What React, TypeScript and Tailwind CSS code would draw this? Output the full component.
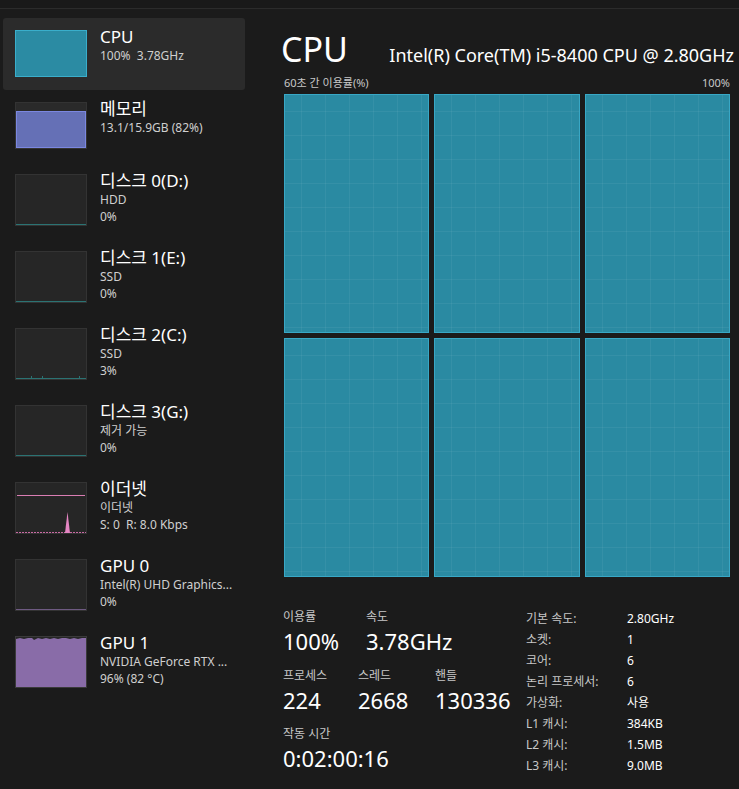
type Item = {
  title: string;
  lines: string[];
  thumb: "cpu" | "mem" | "disk" | "disk2" | "eth" | "gpu0" | "gpu1";
  selected?: boolean;
};

const items: Item[] = [
  { title: "CPU", lines: ["100%  3.78GHz"], thumb: "cpu", selected: true },
  { title: "메모리", lines: ["13.1/15.9GB (82%)"], thumb: "mem" },
  { title: "디스크 0(D:)", lines: ["HDD", "0%"], thumb: "disk" },
  { title: "디스크 1(E:)", lines: ["SSD", "0%"], thumb: "disk" },
  { title: "디스크 2(C:)", lines: ["SSD", "3%"], thumb: "disk2" },
  { title: "디스크 3(G:)", lines: ["제거 가능", "0%"], thumb: "disk" },
  { title: "이더넷", lines: ["이더넷", "S: 0  R: 8.0 Kbps"], thumb: "eth" },
  { title: "GPU 0", lines: ["Intel(R) UHD Graphics...", "0%"], thumb: "gpu0" },
  { title: "GPU 1", lines: ["NVIDIA GeForce RTX ...", "96% (82 °C)"], thumb: "gpu1" },
];

function Thumb({ kind }: { kind: Item["thumb"] }) {
  if (kind === "cpu") {
    return <div className="w-[72px] h-full border border-[#3aaecb] bg-[#2b8ba3]" />;
  }
  if (kind === "mem") {
    return (
      <div className="w-[72px] h-full flex flex-col border border-[#333] bg-[#2a2a2a]">
        <div className="h-[8px]" />
        <div className="flex-1 border border-[#7b87e0] bg-[#6570b6]" />
      </div>
    );
  }
  if (kind === "gpu1") {
    return (
      <div className="w-[72px] h-full border border-[#3a3a3a] bg-[#262626]">
        <svg viewBox="0 0 70 50" preserveAspectRatio="none" className="w-full h-full">
          <polygon
            points="0,2 4,1 8,2 12,1 16,1 18,3 22,1 26,2 30,1 34,2 38,1 42,2 46,1 50,1 54,2 58,1 62,2 66,1 70,1 70,50 0,50"
            fill="#896ca8"
          />
        </svg>
      </div>
    );
  }
  if (kind === "eth") {
    return (
      <div className="w-[72px] h-full border border-[#333] bg-[#262626]">
        <svg viewBox="0 0 70 50" preserveAspectRatio="none" className="w-full h-full">
          <line x1="1" y1="12.5" x2="69" y2="12.5" stroke="#d97db3" strokeWidth="1" />
          <line x1="0" y1="49.5" x2="70" y2="49.5" stroke="#c86aa3" strokeWidth="1" strokeDasharray="2 1" />
          <polygon points="49,50 51.5,29 54,50" fill="#e586c3" />
        </svg>
      </div>
    );
  }
  const line = kind === "gpu0" ? "bg-[#6e5a82]" : "bg-[#2b7373]";
  return (
    <div className="w-[72px] h-full flex flex-col border border-[#333] bg-[#262626]">
      <div className="flex-1 relative">
        {kind === "disk2" && (
          <>
            <div className="absolute bottom-0 left-[15px] w-px h-[2px] bg-[#2b7373]" />
            <div className="absolute bottom-0 left-[26px] w-px h-[2px] bg-[#2b7373]" />
            <div className="absolute bottom-0 left-[63px] w-px h-[2px] bg-[#2b7373]" />
          </>
        )}
      </div>
      <div className={`h-px ${line}`} />
    </div>
  );
}

function SideItem({ item }: { item: Item }) {
  const tall = item.lines.length > 1;
  return (
    <div
      className={`flex gap-[13px] pl-[12px] pt-[12px] pb-[13px] rounded-[3px] ${
        tall ? "h-[77px]" : "h-[72px]"
      } ${item.selected ? "bg-[#2b2b2b]" : ""}`}
    >
      <Thumb kind={item.thumb} />
      <div className="-mt-[3px] min-w-0">
        <div className="text-[17px] leading-[20px] text-white">{item.title}</div>
        {item.lines.map((l, i) => (
          <div key={i} className="text-[12px] leading-[17px] text-[#cfcfcf] whitespace-pre">
            {l}
          </div>
        ))}
      </div>
    </div>
  );
}

function Cell() {
  return (
    <div className="h-[239px] border border-[#38a8c6] bg-[#2a8aa2] bg-[linear-gradient(to_right,rgba(255,255,255,0.05)_1px,transparent_1px),linear-gradient(to_bottom,rgba(255,255,255,0.05)_1px,transparent_1px)] bg-[size:24px_24px] bg-[position:-8px_-8px]" />
  );
}

const specs: [string, string][] = [
  ["기본 속도:", "2.80GHz"],
  ["소켓:", "1"],
  ["코어:", "6"],
  ["논리 프로세서:", "6"],
  ["가상화:", "사용"],
  ["L1 캐시:", "384KB"],
  ["L2 캐시:", "1.5MB"],
  ["L3 캐시:", "9.0MB"],
];

function Stat({ label, value, w }: { label: string; value: string; w: string }) {
  return (
    <div className={w}>
      <div className="text-[12px] leading-[17px] text-[#c8c8c8]">{label}</div>
      <div className="mt-[2px] text-[22px] leading-[28px] text-white">{value}</div>
    </div>
  );
}

export default function App() {
  return (
    <div className="w-[739px] h-[789px] overflow-hidden bg-[#1b1b1b] text-white font-['Noto_Sans','Noto_Sans_CJK_KR',sans-serif]">
      <div className="h-[9px] bg-[#191919] border-b border-[#2b2b2b]" />
      <div className="flex">
        {/* Sidebar */}
        <div className="w-[249px] shrink-0 pl-[3px] pr-[4px] pt-[9px]">
          {items.map((it) => (
            <SideItem key={it.title} item={it} />
          ))}
        </div>

        {/* Main */}
        <div className="flex-1 pl-[35px] pr-[9px] pt-[19px]">
          <div className="flex items-baseline justify-between -ml-[3px] -mr-[4px]">
            <div className="text-[34px] leading-[42px]">CPU</div>
            <div className="text-[18px]">Intel(R) Core(TM) i5-8400 CPU @ 2.80GHz</div>
          </div>
          <div className="flex justify-between text-[11px] leading-[15px] text-[#c8c8c8] mt-[5px] mb-[4px]">
            <span>60초 간 이용률(%)</span>
            <span>100%</span>
          </div>
          <div className="grid grid-cols-3 gap-x-[5px] gap-y-[5px]">
            <Cell />
            <Cell />
            <Cell />
            <Cell />
            <Cell />
            <Cell />
          </div>

          <div className="flex mt-[31px]">
            <div className="w-[243px] -ml-[1px]">
              <div className="flex">
                <Stat label="이용률" value="100%" w="w-[83px]" />
                <Stat label="속도" value="3.78GHz" w="" />
              </div>
              <div className="flex mt-[12px]">
                <Stat label="프로세스" value="224" w="w-[75px]" />
                <Stat label="스레드" value="2668" w="w-[77px]" />
                <Stat label="핸들" value="130336" w="" />
              </div>
              <div className="mt-[11px]">
                <Stat label="작동 시간" value="0:02:00:16" w="" />
              </div>
            </div>
            <div>
              {specs.map(([k, v]) => (
                <div key={k} className="flex h-[21px] items-center text-[12px]">
                  <span className="w-[101px] text-[#c8c8c8]">{k}</span>
                  <span className="text-white">{v}</span>
                </div>
              ))}
            </div>
          </div>
        </div>
      </div>
    </div>
  );
}
